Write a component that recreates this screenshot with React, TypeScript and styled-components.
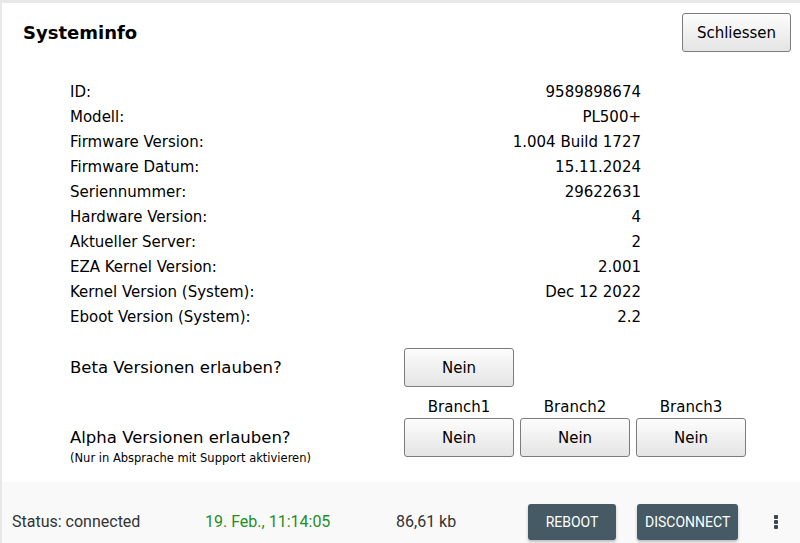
import styled, { createGlobalStyle } from 'styled-components';

const GlobalStyle = createGlobalStyle`
  html, body {
    margin: 0;
    padding: 0;
    background: #e8e8e8;
  }
  * {
    box-sizing: border-box;
  }
`;

const Screen = styled.div`
  width: 800px;
  height: 543px;
  padding: 3px 0 0 2px;
  display: flex;
  flex-direction: column;
  overflow: hidden;
`;

const Panel = styled.div`
  height: 479px;
  background: #ffffff;
  font-family: 'DejaVu Sans', Tahoma, sans-serif;
  color: #000;
  display: flex;
  flex-direction: column;
`;

const Header = styled.div`
  display: flex;
  align-items: center;
  justify-content: space-between;
  padding: 10px 9px 0 21px;
`;

const Title = styled.h1`
  margin: 0;
  font-size: 18px;
  font-weight: bold;
`;

const KeyButton = styled.button<{ w?: number }>`
  width: ${(p) => p.w ?? 110}px;
  height: 39px;
  background: linear-gradient(#fdfdfd, #e4e4e4);
  border: 1px solid #7c7c7c;
  border-radius: 3px;
  font-family: 'DejaVu Sans', Tahoma, sans-serif;
  font-size: 15px;
  color: #000;
  padding: 0;
  cursor: pointer;
`;

const InfoTable = styled.div`
  margin: 28px 0 0 68px;
  width: 571px;
  display: flex;
  flex-direction: column;
`;

const InfoRow = styled.div`
  display: flex;
  justify-content: space-between;
  height: 25px;
  line-height: 25px;
  font-size: 15px;
`;

const Options = styled.div`
  margin: 18px 0 0 68px;
  display: grid;
  grid-template-columns: 328px repeat(3, 110px);
  column-gap: 6px;
  align-items: center;
`;

const OptionLabel = styled.div`
  font-size: 16.5px;
`;

const AlphaLabel = styled.div`
  align-self: start;
  display: flex;
  flex-direction: column;
`;

const AlphaTitle = styled.span`
  font-size: 16.5px;
  line-height: 40px;
`;

const Hint = styled.span`
  margin-top: -6px;
  font-size: 11.5px;
  line-height: 13px;
`;

const BranchLabel = styled.div`
  text-align: center;
  font-size: 15px;
  line-height: 18px;
  margin: 11px 0 2px;
`;

const Footer = styled.div`
  height: 61px;
  background: #f9f9f9;
  display: flex;
  align-items: center;
  padding: 18px 0 0 10px;
  font-family: Roboto, 'Noto Sans', sans-serif;
  font-size: 16px;
  color: #333;
`;

const Cell = styled.div<{ w: number; tone?: string }>`
  width: ${(p) => p.w}px;
  color: ${(p) => p.tone ?? 'inherit'};
`;

const ActionButton = styled.button`
  height: 36px;
  min-width: 88px;
  padding: 0 8px;
  margin-right: 21px;
  background: #455a64;
  color: #fff;
  border: none;
  border-radius: 3px;
  font-family: Roboto, sans-serif;
  font-weight: 400;
  font-size: 14px;
  box-shadow: 0 2px 3px rgba(0, 0, 0, 0.25);
  cursor: pointer;
`;

const MenuDots = styled.div`
  margin-left: 15px;
  display: flex;
  flex-direction: column;
  gap: 1px;
  & > span {
    width: 4px;
    height: 4px;
    border-radius: 1px;
    background: #37474f;
  }
`;

const info: [string, string][] = [
  ['ID:', '9589898674'],
  ['Modell:', 'PL500+'],
  ['Firmware Version:', '1.004 Build 1727'],
  ['Firmware Datum:', '15.11.2024'],
  ['Seriennummer:', '29622631'],
  ['Hardware Version:', '4'],
  ['Aktueller Server:', '2'],
  ['EZA Kernel Version:', '2.001'],
  ['Kernel Version (System):', 'Dec 12 2022'],
  ['Eboot Version (System):', '2.2'],
];

const branches = ['Branch1', 'Branch2', 'Branch3'];

export default function App() {
  return (
    <>
      <GlobalStyle />
      <Screen>
        <Panel>
          <Header>
            <Title>Systeminfo</Title>
            <KeyButton w={109}>Schliessen</KeyButton>
          </Header>

          <InfoTable>
            {info.map(([k, v]) => (
              <InfoRow key={k}>
                <span>{k}</span>
                <span>{v}</span>
              </InfoRow>
            ))}
          </InfoTable>

          <Options>
            <OptionLabel>Beta Versionen erlauben?</OptionLabel>
            <KeyButton>Nein</KeyButton>
            <span />
            <span />

            <span />
            {branches.map((b) => (
              <BranchLabel key={b}>{b}</BranchLabel>
            ))}

            <AlphaLabel>
              <AlphaTitle>Alpha Versionen erlauben?</AlphaTitle>
              <Hint>(Nur in Absprache mit Support aktivieren)</Hint>
            </AlphaLabel>
            {branches.map((b) => (
              <KeyButton key={b} style={{ alignSelf: 'start' }}>
                Nein
              </KeyButton>
            ))}
          </Options>
        </Panel>

        <Footer>
          <Cell w={193}>Status: connected</Cell>
          <Cell w={191} tone="#1f8f1f">
            19. Feb., 11:14:05
          </Cell>
          <Cell w={132}>86,61 kb</Cell>
          <ActionButton>REBOOT</ActionButton>
          <ActionButton>DISCONNECT</ActionButton>
          <MenuDots>
            <span />
            <span />
            <span />
          </MenuDots>
        </Footer>
      </Screen>
    </>
  );
}
